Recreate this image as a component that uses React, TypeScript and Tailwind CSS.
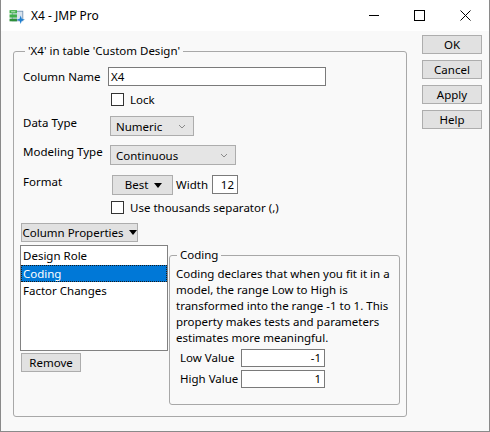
import React from 'react'

const btn =
  'h-[19px] bg-[#e1e1e1] border border-[#adadad] flex items-center justify-center leading-none whitespace-nowrap'

function Chevron() {
  return (
    <svg width="8" height="5" viewBox="0 0 8 5" className="shrink-0">
      <path d="M1 1 L4 4 L7 1" fill="none" stroke="#8a8a8a" strokeWidth="1" />
    </svg>
  )
}

function Caret() {
  return (
    <svg width="8" height="5" viewBox="0 0 8 5" className="shrink-0">
      <path d="M0 0 H8 L4 5 Z" fill="#000" />
    </svg>
  )
}

function Check({ label, className }: { label: string; className?: string }) {
  return (
    <div className={'flex items-center h-[13px] ' + (className ?? '')}>
      <div className="w-[13px] h-[13px] bg-white border border-[#333333]" />
      <span className="ml-[6px] leading-none">{label}</span>
    </div>
  )
}

function AppIcon() {
  return (
    <svg width="17" height="16" viewBox="0 0 16 15">
      <rect x="3" y="3" width="10" height="9" fill="#d8e3ee" stroke="#6f8fb0" strokeWidth="0.8" />
      <rect x="0.5" y="2" width="7" height="3" fill="#3fae49" />
      <rect x="0.5" y="6" width="7" height="3" fill="#3fae49" />
      <rect x="0.5" y="10" width="7" height="2.5" fill="#2e8f39" />
      <rect x="2" y="3" width="4" height="1" fill="#b9e3bc" />
      <path d="M11 7 L12 10 L15 11 L12 12 L11 15 L10 12 L7 11 L10 10 Z" fill="#1f7fd1" />
    </svg>
  )
}

export default function App() {
  return (
    <div className="w-[490px] h-[432px] bg-[#f9f9f9] border border-t-0 border-[#8a8a8a] flex flex-col text-[11.5px] text-black font-['Noto_Sans','DejaVu_Sans',sans-serif] overflow-hidden">
      {/* title bar */}
      <div className="h-[31px] bg-white flex items-center shrink-0">
        <div className="ml-[8px] mt-[1px]">
          <AppIcon />
        </div>
        <span className="ml-[5px] text-[12px]">X4 - JMP Pro</span>
        <div className="ml-auto flex items-center">
          <svg width="46" height="31" viewBox="0 0 46 31">
            <path d="M18 15.5 H28" stroke="#000" strokeWidth="1" />
          </svg>
          <svg width="46" height="31" viewBox="0 0 46 31">
            <rect x="17.5" y="10.5" width="10" height="10" fill="none" stroke="#000" strokeWidth="1" />
          </svg>
          <svg width="46" height="31" viewBox="0 0 46 31">
            <path d="M17.5 10.5 L27.5 20.5 M27.5 10.5 L17.5 20.5" stroke="#000" strokeWidth="1" />
          </svg>
        </div>
      </div>

      {/* body */}
      <div className="flex flex-1">
        <fieldset className="ml-[12px] mt-[12px] w-[394px] min-w-0 h-[374px] shrink-0 border border-[#a8a8a8] rounded-[3px] pl-[9px] pr-0 pb-0 pt-[8px]">
          <legend className="ml-[2px] px-[3px] leading-[16px]">'X4' in table 'Custom Design'</legend>

          <div className="flex items-center h-[19px]">
            <span className="w-[85px]">Column Name</span>
            <div className="w-[218px] h-[19px] bg-white border border-[#7a7a7a] px-[2px] flex items-center">X4</div>
          </div>

          <Check label="Lock" className="mt-[7px] ml-[88px]" />

          <div className="flex items-start mt-[10px] h-[20px]">
            <span className="w-[87px] leading-[14px]">Data Type</span>
            <div className="w-[84px] h-[20px] bg-[#e5e5e5] border border-[#adadad] flex items-center pl-[5px] pr-[7px] justify-between">
              <span className="mt-[1px]">Numeric</span>
              <Chevron />
            </div>
          </div>

          <div className="flex items-start mt-[9px] h-[20px]">
            <span className="w-[87px] leading-[14px]">Modeling Type</span>
            <div className="w-[126px] h-[20px] bg-[#e5e5e5] border border-[#adadad] flex items-center pl-[5px] pr-[7px] justify-between">
              <span className="mt-[1px]">Continuous</span>
              <Chevron />
            </div>
          </div>

          <div className="flex items-start mt-[10px] h-[20px]">
            <span className="w-[89px] leading-[14px]">Format</span>
            <div className={btn + ' w-[61px] h-[20px] gap-[6px] pl-[2px]'}>
              <span>Best</span>
              <Caret />
            </div>
            <span className="ml-[3px] mt-[3px] leading-[14px]">Width</span>
            <div className="ml-[4px] w-[26px] h-[19px] bg-white border border-[#7a7a7a] flex items-center justify-end pr-[3px]">12</div>
          </div>

          <Check label="Use thousands separator (,)" className="mt-[6px] ml-[88px]" />

          <div className={btn + ' mt-[9px] ml-[-2px] w-[117px] gap-[5px] px-[2px]'}>
            <span>Column Properties</span>
            <Caret />
          </div>

          <div className="flex items-start mt-[3px] ml-[-3px]">
            <div className="flex flex-col shrink-0">
              <div className="w-[148px] h-[106px] bg-white border border-[#828282] flex flex-col pt-[1px]">
                <div className="h-[18px] leading-[18px] px-[2px]">Design Role</div>
                <div className="h-[17px] leading-[15px] px-[1px] bg-[#0078d7] text-white border border-dotted border-[#1a1a1a]">Coding</div>
                <div className="h-[18px] leading-[18px] px-[2px]">Factor Changes</div>
              </div>
              <div className={btn + ' mt-[2px] ml-[1px] w-[60px]'}>Remove</div>
            </div>

            <fieldset className="ml-[1px] mt-[2px] w-[231px] min-w-0 shrink-0 h-[158px] border border-[#a8a8a8] rounded-[3px] px-[6px] pt-[3px]">
              <legend className="ml-[1px] px-[3px] leading-[16px]">Coding</legend>
              <div className="leading-[16px] whitespace-nowrap">
                <div>Coding declares that when you fit it in a</div>
                <div>model, the range Low to High is</div>
                <div>transformed into the range -1 to 1. This</div>
                <div>property makes tests and parameters</div>
                <div>estimates more meaningful.</div>
              </div>
              <div className="flex items-center mt-[3px] h-[18px]">
                <span className="w-[65px] pl-[4px]">Low Value</span>
                <div className="w-[84px] h-[18px] bg-white border border-[#7a7a7a] flex items-center justify-end pr-[3px]">-1</div>
              </div>
              <div className="flex items-center mt-[3px] h-[18px]">
                <span className="w-[65px] pl-[4px]">High Value</span>
                <div className="w-[84px] h-[18px] bg-white border border-[#7a7a7a] flex items-center justify-end pr-[3px]">1</div>
              </div>
            </fieldset>
          </div>
        </fieldset>

        <div className="ml-[15px] mt-[4px] flex flex-col gap-[6px]">
          <div className={btn + ' w-[60px]'}>OK</div>
          <div className={btn + ' w-[60px]'}>Cancel</div>
          <div className={btn + ' w-[60px]'}>Apply</div>
          <div className={btn + ' w-[60px]'}>Help</div>
        </div>
      </div>
    </div>
  )
}
